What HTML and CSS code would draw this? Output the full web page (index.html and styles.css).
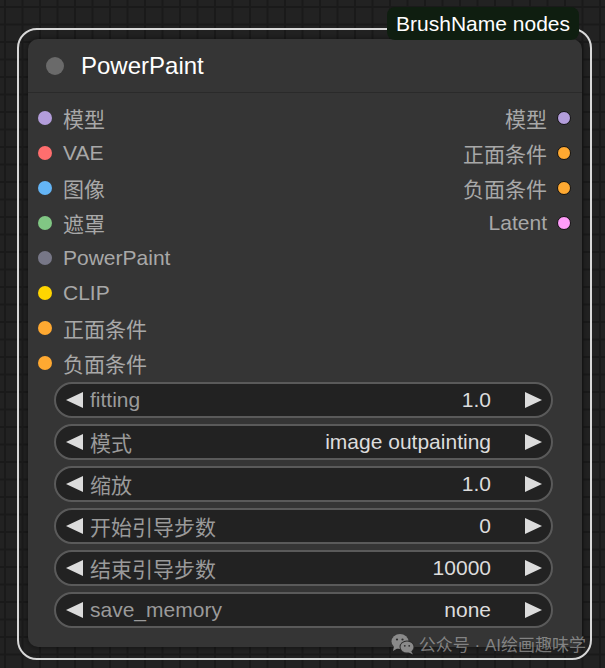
FILE: index.html
```html
<!DOCTYPE html>
<html>
<head>
<meta charset="utf-8">
<link rel="stylesheet" href="styles.css">
</head>
<body>
<div class="canvas">
  <div class="outline">
    <div class="badge">BrushName nodes</div>
    <div class="node">
      <div class="title"><span class="tdot"></span><span class="tname">PowerPaint</span></div>
      <div class="io">
        <div class="inputs">
          <div class="row"><span class="dot" style="background:#b39ddb"></span>模型</div>
          <div class="row"><span class="dot" style="background:#ff6e6e"></span>VAE</div>
          <div class="row"><span class="dot" style="background:#64b5f6"></span>图像</div>
          <div class="row"><span class="dot" style="background:#81c784"></span>遮罩</div>
          <div class="row"><span class="dot" style="background:#777787"></span>PowerPaint</div>
          <div class="row"><span class="dot" style="background:#ffd500"></span>CLIP</div>
          <div class="row"><span class="dot" style="background:#ffa931"></span>正面条件</div>
          <div class="row"><span class="dot" style="background:#ffa931"></span>负面条件</div>
        </div>
        <div class="outputs">
          <div class="row">模型<span class="odot" style="background:#b39ddb"></span></div>
          <div class="row">正面条件<span class="odot" style="background:#ffa931"></span></div>
          <div class="row">负面条件<span class="odot" style="background:#ffa931"></span></div>
          <div class="row">Latent<span class="odot" style="background:#ff9cf9"></span></div>
        </div>
      </div>
      <div class="widgets">
        <div class="widget"><svg class="arr" viewBox="0 0 17 16"><polygon points="17,0 17,16 0,8"/></svg><span class="wl">fitting</span><span class="wv">1.0</span><svg class="arr ar" viewBox="0 0 17 16"><polygon points="0,0 0,16 17,8"/></svg></div>
        <div class="widget"><svg class="arr" viewBox="0 0 17 16"><polygon points="17,0 17,16 0,8"/></svg><span class="wl">模式</span><span class="wv">image outpainting</span><svg class="arr ar" viewBox="0 0 17 16"><polygon points="0,0 0,16 17,8"/></svg></div>
        <div class="widget"><svg class="arr" viewBox="0 0 17 16"><polygon points="17,0 17,16 0,8"/></svg><span class="wl">缩放</span><span class="wv">1.0</span><svg class="arr ar" viewBox="0 0 17 16"><polygon points="0,0 0,16 17,8"/></svg></div>
        <div class="widget"><svg class="arr" viewBox="0 0 17 16"><polygon points="17,0 17,16 0,8"/></svg><span class="wl">开始引导步数</span><span class="wv">0</span><svg class="arr ar" viewBox="0 0 17 16"><polygon points="0,0 0,16 17,8"/></svg></div>
        <div class="widget"><svg class="arr" viewBox="0 0 17 16"><polygon points="17,0 17,16 0,8"/></svg><span class="wl">结束引导步数</span><span class="wv">10000</span><svg class="arr ar" viewBox="0 0 17 16"><polygon points="0,0 0,16 17,8"/></svg></div>
        <div class="widget"><svg class="arr" viewBox="0 0 17 16"><polygon points="17,0 17,16 0,8"/></svg><span class="wl">save_memory</span><span class="wv">none</span><svg class="arr ar" viewBox="0 0 17 16"><polygon points="0,0 0,16 17,8"/></svg></div>
      </div>
    </div>
    <div class="watermark">
      <svg class="wx" viewBox="0 0 24 22">
        <ellipse cx="9" cy="8.5" rx="8.5" ry="7.5" fill="#8a8a8a"/>
        <polygon points="3,13 2,18 7,15" fill="#8a8a8a"/>
        <ellipse cx="16" cy="14" rx="7.5" ry="6.5" fill="#2c2c2c"/>
        <ellipse cx="16" cy="14" rx="6.5" ry="5.5" fill="#8a8a8a"/>
        <polygon points="20,18 22,21.5 17,19" fill="#8a8a8a"/>
        <circle cx="6" cy="6.5" r="1.1" fill="#2c2c2c"/>
        <circle cx="11.5" cy="6.5" r="1.1" fill="#2c2c2c"/>
        <circle cx="13.8" cy="12.8" r="0.9" fill="#2c2c2c"/>
        <circle cx="18.2" cy="12.8" r="0.9" fill="#2c2c2c"/>
      </svg>
      <span>公众号 · AI绘画趣味学</span>
    </div>
  </div>
</div>
</body>
</html>
```
FILE: styles.css
```css
html, body {
  margin: 0;
  padding: 0;
}
body {
  width: 605px;
  height: 668px;
  overflow: hidden;
  background-color: #222222;
  background-image:
    linear-gradient(to right, #1a1a1a 0, #1a1a1a 2px, transparent 2px),
    linear-gradient(to bottom, #1a1a1a 0, #1a1a1a 2px, transparent 2px);
  background-size: 17.5px 17.5px;
  background-position: 4px 6px;
  font-family: "Liberation Sans", "Noto Sans CJK SC", sans-serif;
}
.canvas {
  padding: 28px 0 0 17px;
}
.outline {
  position: relative;
  width: 554px;
  border: 2px solid #d8d8d8;
  border-radius: 20px;
  padding: 9px 8px 11px 9px;
}
.badge {
  position: absolute;
  top: -23px;
  right: 11px;
  height: 33px;
  padding: 0 9px;
  line-height: 33px;
  background: #0f1e10;
  color: #ffffff;
  font-size: 21px;
  border-radius: 8px;
}
.node {
  background: #353535;
  border-radius: 10px;
  height: 608px;
  box-shadow: 0 0 6px rgba(0,0,0,0.5);
}
.title {
  height: 53px;
  border-bottom: 1px solid #2a2a2a;
  display: flex;
  align-items: center;
  padding-left: 18px;
}
.tdot {
  width: 18px;
  height: 18px;
  border-radius: 50%;
  background: #6a6a6a;
  margin-right: 17px;
}
.tname {
  color: #ffffff;
  font-size: 24px;
}
.io {
  display: flex;
  justify-content: space-between;
  padding-top: 7px;
}
.inputs {
  padding-left: 10px;
}
.outputs {
  padding-right: 11px;
}
.row {
  height: 35px;
  display: flex;
  align-items: center;
  color: #a8a8a8;
  font-size: 21px;
}
.outputs .row {
  justify-content: flex-end;
}
.dot {
  width: 14px;
  height: 14px;
  border-radius: 50%;
  margin-right: 11px;
}
.odot {
  width: 12px;
  height: 12px;
  border-radius: 50%;
  border: 1.5px solid #111;
  margin-left: 10px;
}
.widgets {
  display: flex;
  flex-direction: column;
  gap: 6px;
  margin: 2px 29px 0 26px;
}
.widget {
  box-sizing: border-box;
  height: 36px;
  border: 2px solid #5a5a5a;
  border-radius: 18px;
  background: #222222;
  display: flex;
  align-items: center;
  padding: 0 9px 0 10px;
  font-size: 21px;
}
.arr {
  width: 17px;
  height: 16px;
  fill: #dcdcdc;
  flex: none;
}
.wl {
  color: #9a9a9a;
  margin-left: 7px;
  flex: 1;
}
.wv {
  color: #dcdcdc;
  margin-right: 34px;
}
.watermark {
  position: absolute;
  right: 4px;
  bottom: 2px;
  display: flex;
  align-items: center;
  color: rgba(200,200,200,0.55);
  font-size: 17px;
}
.wx {
  width: 24px;
  height: 22px;
  margin-right: 4px;
}
```
